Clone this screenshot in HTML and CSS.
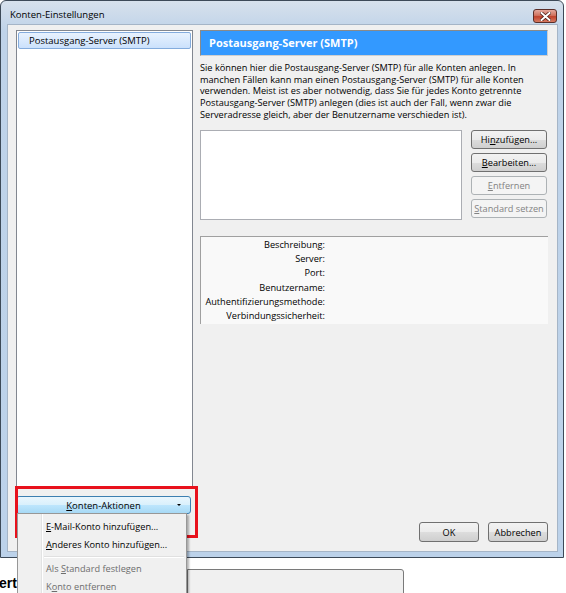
FILE: index.html
```html
<!DOCTYPE html>
<html lang="de">
<head>
    <meta charset="UTF-8">
    <title>Konten-Einstellungen</title>
    <link rel="stylesheet" href="styles.css">
</head>
<body>
    <div class="window">
        <!-- Title bar -->
        <div class="titlebar">
            <span class="title">Konten-Einstellungen</span>
            <button class="close-btn">
                <svg width="11" height="9" viewBox="0 0 11 9">
                    <path d="M1.5 1 L9.5 8 M9.5 1 L1.5 8" stroke="#4a1a14" stroke-width="3.4" stroke-linecap="square"/>
                    <path d="M1.5 1 L9.5 8 M9.5 1 L1.5 8" stroke="#fff" stroke-width="2" stroke-linecap="square"/>
                </svg>
            </button>
        </div>

        <div class="client">
            <!-- Account tree -->
            <div class="sidebar">
                <div class="tree">
                    <div class="tree-item selected">Postausgang-Server (SMTP)</div>
                </div>
                <button class="actions-btn">
                    <span><u>K</u>onten-Aktionen</span>
                    <span class="arrow"></span>
                </button>
            </div>

            <!-- SMTP page -->
            <div class="main">
                <div class="page-header">Postausgang-Server (SMTP)</div>
                <p class="desc">Sie können hier die Postausgang-Server (SMTP) für alle Konten anlegen. In<br>manchen Fällen kann man einen Postausgang-Server (SMTP) für alle Konten<br>verwenden. Meist ist es aber notwendig, dass Sie für jedes Konto getrennte<br>Postausgang-Server (SMTP) anlegen (dies ist auch der Fall, wenn zwar die<br>Serveradresse gleich, aber der Benutzername verschieden ist).</p>

                <div class="server-row">
                    <div class="server-list"></div>
                    <div class="server-buttons">
                        <button class="btn">Hi<u>n</u>zufügen...</button>
                        <button class="btn"><u>B</u>earbeiten...</button>
                        <button class="btn" disabled><u>E</u>ntfernen</button>
                        <button class="btn" disabled><u>S</u>tandard setzen</button>
                    </div>
                </div>

                <div class="details">
                    <div class="label">Beschreibung:</div><div></div>
                    <div class="label">Server:</div><div></div>
                    <div class="label">Port:</div><div></div>
                    <div class="label">Benutzername:</div><div></div>
                    <div class="label">Authentifizierungsmethode:</div><div></div>
                    <div class="label">Verbindungssicherheit:</div><div></div>
                </div>

                <div class="footer">
                    <button class="btn dlg-btn">OK</button>
                    <button class="btn dlg-btn">Abbrechen</button>
                </div>
            </div>
        </div>
    </div>

    <!-- what shows under the dialog -->
    <div class="below">
        <span class="behind-text">ert</span>
        <div class="behind-window"></div>
    </div>

    <!-- marker round the button and the first item -->
    <div class="highlight"></div>

    <!-- open drop-down menu -->
    <div class="menu">
        <div class="menu-item"><u>E</u>-Mail-Konto hinzufügen...</div>
        <div class="menu-item"><u>A</u>nderes Konto hinzufügen...</div>
        <div class="menu-sep"></div>
        <div class="menu-item disabled">Als <u>S</u>tandard festlegen</div>
        <div class="menu-item disabled">K<u>o</u>nto entfernen</div>
    </div>
</body>
</html>
```

FILE: styles.css
```css
body {
    margin: 0;
    background: #ffffff;
    font-family: "Open Sans", "Noto Sans", sans-serif;
    font-size: 9.2px;
    color: #000;
    position: relative;
    width: 566px;
    height: 593px;
    overflow: hidden;
}

u {
    text-decoration: underline;
    text-underline-offset: 1px;
}

.window {
    width: 562px;
    height: 556px;
    border: 1px solid #3d4a58;
    border-radius: 6px 6px 0 0;
    background: linear-gradient(#d7e1ec, #bfd3e9 30px, #bcd2ea);
    display: flex;
    flex-direction: column;
}

.titlebar {
    height: 23px;
    display: flex;
    align-items: flex-start;
    justify-content: space-between;
    padding: 0 6px 0 9px;
}

.title {
    padding-top: 7px;
    font-size: 9.5px;
}

.close-btn {
    margin-top: 8px;
    width: 24px;
    height: 14px;
    border: 1px solid #5a2e28;
    border-radius: 3px;
    background: linear-gradient(#e4a79c, #d0735f 45%, #c0422c 55%, #d67a62);
    display: flex;
    align-items: center;
    justify-content: center;
    padding: 0;
}

.client {
    flex: 1;
    margin: 0 5px 5px 6px;
    background: #f0f0f0;
    border: 1px solid #a5b5c7;
    display: flex;
    padding: 5px 9px 9px 8px;
}

/* left side */
.sidebar {
    width: 177px;
    display: flex;
    flex-direction: column;
}

.tree {
    height: 457px;
    box-sizing: border-box;
    background: #fff;
    border: 1px solid #828790;
    padding: 1px;
}

.tree-item {
    height: 15px;
    line-height: 15px;
    padding-left: 10px;
    font-size: 9.5px;
}

.tree-item.selected {
    background: linear-gradient(#e8f2fe, #cbe1fc);
    border: 1px solid #84acdd;
    border-radius: 2px;
}

.actions-btn {
    margin-top: 9px;
    width: 175px;
    height: 18px;
    border: 1px solid #3c7fb1;
    border-radius: 3px;
    background: linear-gradient(#eaf6fd, #d9f0fc 50%, #bee6fd 50%, #a7d9f5);
    font-family: inherit;
    font-size: 9.5px;
    position: relative;
    padding: 0;
}

.actions-btn .arrow {
    position: absolute;
    right: 9px;
    top: 7px;
    border-left: 2px solid transparent;
    border-right: 2px solid transparent;
    border-top: 2px solid #000;
}

/* right side */
.main {
    flex: 1;
    margin-left: 7px;
    display: flex;
    flex-direction: column;
}

.page-header {
    height: 24px;
    line-height: 24px;
    background: #3399ff;
    border: 1px solid #8a8a8a;
    border-right-color: #cfcfcf;
    border-bottom-color: #cfcfcf;
    color: #fff;
    font-weight: bold;
    font-size: 11px;
    padding-left: 8px;
}

.desc {
    margin: 6px 0 0 0;
    line-height: 11.7px;
    white-space: nowrap;
}

.server-row {
    display: flex;
    gap: 9px;
    margin-top: 9px;
}

.server-list {
    width: 260px;
    height: 88px;
    background: #fff;
    border: 1px solid #abadb3;
}

.server-buttons {
    display: flex;
    flex-direction: column;
    gap: 4px;
}

.btn {
    width: 76px;
    height: 19px;
    padding: 0;
    border: 1px solid #707070;
    border-radius: 3px;
    background: linear-gradient(#f2f2f2, #ebebeb 50%, #dddddd 50%, #cfcfcf);
    font-family: inherit;
    font-size: 9.2px;
    color: #000;
}

.btn:disabled {
    border-color: #adb2b5;
    background: #f4f4f4;
    color: #838383;
}

.details {
    margin-top: 16px;
    height: 88px;
    background: #f9f9f9;
    border-top: 1px solid #a0a0a0;
    border-left: 1px solid #a0a0a0;
    display: grid;
    grid-template-columns: 124px 1fr;
    grid-auto-rows: 14.4px;
    align-content: start;
    padding-top: 1px;
    box-sizing: border-box;
}

.details .label {
    text-align: right;
    line-height: 14.4px;
}

.footer {
    margin-top: auto;
    display: flex;
    justify-content: flex-end;
    gap: 9px;
}

.dlg-btn {
    width: 60px;
    height: 20px;
}

/* under the dialog */
.below {
    height: 35px;
    position: relative;
}

.behind-text {
    position: absolute;
    left: -1px;
    top: 17px;
    font-family: "Liberation Sans", sans-serif;
    font-weight: bold;
    font-size: 14px;
}

.behind-window {
    position: absolute;
    left: 187px;
    top: 11px;
    width: 215px;
    height: 40px;
    background: #f0f0f0;
    border: 1px solid #7a7a7a;
    border-radius: 0 3px 0 0;
}

.highlight {
    position: absolute;
    left: 15px;
    top: 486px;
    width: 177px;
    height: 46px;
    border: 3px solid #e8111c;
}

.menu {
    position: absolute;
    left: 17px;
    top: 513px;
    width: 170px;
    height: 90px;
    background: linear-gradient(to right, #f0f0f0 23px, #e2e3e3 23px, #e2e3e3 24px, #ffffff 24px, #ffffff 25px, #f0f0f0 25px);
    border: 1px solid #979797;
    box-shadow: 2px 2px 2px rgba(0, 0, 0, 0.3);
    padding: 4px 2px;
    box-sizing: border-box;
}

.menu-item {
    height: 18px;
    line-height: 18px;
    padding-left: 26px;
    font-size: 9.2px;
}

.menu-item.disabled {
    color: #6d6d6d;
}

.menu-sep {
    height: 1px;
    margin: 2px 0 2px 24px;
    background: #e0e0e0;
    border-bottom: 1px solid #fff;
}
```
